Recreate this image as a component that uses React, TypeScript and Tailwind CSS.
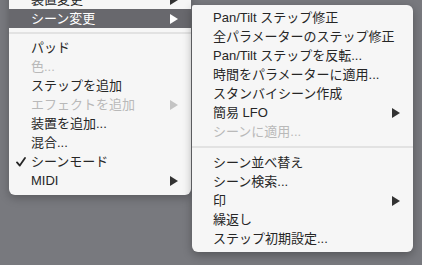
import React from "react";

type Item =
  | { kind: "sep"; h: number }
  | {
      kind: "item";
      label: string;
      disabled?: boolean;
      arrow?: boolean;
      checked?: boolean;
      active?: boolean;
    };

const leftItems: Item[] = [
  { kind: "item", label: "装置変更", arrow: true },
  { kind: "item", label: "シーン変更", arrow: true, active: true },
  { kind: "sep", h: 10 },
  { kind: "item", label: "パッド" },
  { kind: "item", label: "色...", disabled: true },
  { kind: "item", label: "ステップを追加" },
  { kind: "item", label: "エフェクトを追加", arrow: true, disabled: true },
  { kind: "item", label: "装置を追加..." },
  { kind: "item", label: "混合..." },
  { kind: "item", label: "シーンモード", checked: true },
  { kind: "item", label: "MIDI", arrow: true },
];

const rightItems: Item[] = [
  { kind: "item", label: "Pan/Tilt ステップ修正" },
  { kind: "item", label: "全パラメーターのステップ修正" },
  { kind: "item", label: "Pan/Tilt ステップを反転..." },
  { kind: "item", label: "時間をパラメーターに適用..." },
  { kind: "item", label: "スタンバイシーン作成" },
  { kind: "item", label: "簡易 LFO", arrow: true },
  { kind: "item", label: "シーンに適用...", disabled: true },
  { kind: "sep", h: 12 },
  { kind: "item", label: "シーン並べ替え" },
  { kind: "item", label: "シーン検索..." },
  { kind: "item", label: "印", arrow: true },
  { kind: "item", label: "繰返し" },
  { kind: "item", label: "ステップ初期設定..." },
];

function Arrow({ color }: { color: string }) {
  return (
    <svg width="8" height="10" viewBox="0 0 8 10" className="shrink-0">
      <polygon points="0,0 8,5 0,10" fill={color} />
    </svg>
  );
}

function Check({ color }: { color: string }) {
  return (
    <svg width="10" height="10" viewBox="0 0 10 10" className="shrink-0">
      <path
        d="M1 5.4 L3.8 8.6 L9 1"
        fill="none"
        stroke={color}
        strokeWidth="1.8"
        strokeLinecap="round"
        strokeLinejoin="round"
      />
    </svg>
  );
}

function MenuRows({ items, padL }: { items: Item[]; padL: string }) {
  return (
    <>
      {items.map((it, i) => {
        if (it.kind === "sep") {
          return (
            <div key={i} className="flex items-center" style={{ height: it.h }}>
              <div className="h-[2px] w-full bg-[#e2e2e2]" />
            </div>
          );
        }
        const color = it.active
          ? "#ffffff"
          : it.disabled
          ? "#b9b9b9"
          : "#262626";
        return (
          <div
            key={i}
            className={`relative flex h-[19px] items-center pr-[13px] ${padL} ${
              it.active ? "bg-[#68686d]" : ""
            }`}
            style={{ color }}
          >
            {it.checked && (
              <div className="absolute left-[7px] top-[5px]">
                <Check color={color} />
              </div>
            )}
            <span className="flex-1 whitespace-nowrap leading-[19px]">
              {it.label}
            </span>
            {it.arrow && <Arrow color={it.active ? "#ffffff" : it.disabled ? "#c4c4c4" : "#333333"} />}
          </div>
        );
      })}
    </>
  );
}

export default function App() {
  return (
    <div
      className="relative h-[265px] w-[422px] overflow-hidden bg-[#78797e] text-[13px]"
      style={{
        fontFamily:
          '"Liberation Sans", "Noto Sans CJK JP", "Noto Sans", sans-serif',
      }}
    >
      <div className="absolute left-[9px] top-[-14px] w-[182px] rounded-b-[6px] bg-[#f6f6f6] pb-[5px] pt-[4px] shadow-[0_3px_10px_rgba(0,0,0,0.25)]">
        <MenuRows items={leftItems} padL="pl-[22px]" />
      </div>
      <div className="absolute left-[192px] top-[5px] w-[221px] rounded-[6px] rounded-tl-[2px] bg-[#f6f6f6] pb-[4px] pt-[3px] shadow-[0_3px_10px_rgba(0,0,0,0.3)]">
        <MenuRows items={rightItems} padL="pl-[21px]" />
      </div>
    </div>
  );
}
